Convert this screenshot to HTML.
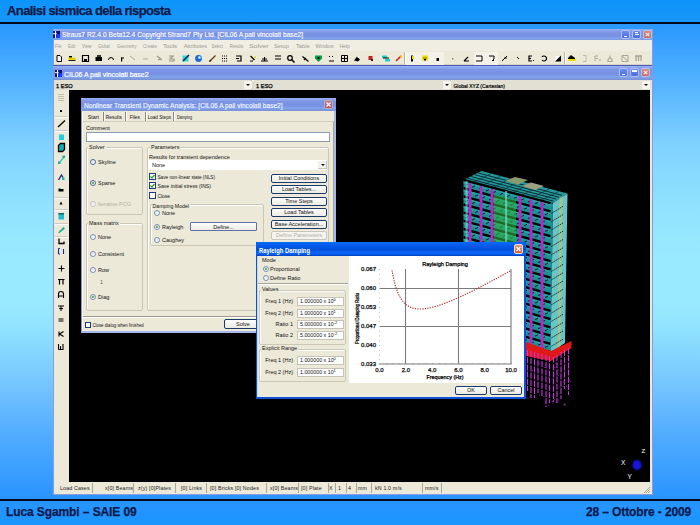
<!DOCTYPE html>
<html><head><meta charset="utf-8">
<style>
*{margin:0;padding:0;box-sizing:border-box}
html,body{width:700px;height:525px;overflow:hidden}
body{position:relative;font-family:"Liberation Sans",sans-serif;background:linear-gradient(to bottom,#0c94fa 0px,#1696f8 20px,#2a98ff 25px,#55b4ff 85px,#80d2ff 145px,#90e2ff 205px,#9aeaff 260px,#9aeaff 300px,#92e4ff 325px,#82d2ff 360px,#72c2ff 390px,#4aa8ff 445px,#2a94ff 498px,#1a96ff 525px)}
.a{position:absolute}
.hdr{left:7px;top:3px;font-size:13px;font-weight:bold;color:#0b1a4c;letter-spacing:-0.6px;white-space:nowrap;-webkit-text-stroke:0.25px #0a1840}
.ftr{top:505px;font-size:12px;font-weight:bold;color:#0b1a4c;white-space:nowrap;-webkit-text-stroke:0.25px #0a1840}
.line{left:0;width:700px;height:2px;background:#050a20}
.tb{background:linear-gradient(to bottom,#98b2f2 0%,#7e96e6 25%,#7890e2 55%,#80a4ee 80%,#7a8ed0 100%)}
.ttl{color:#fff;font-size:6.3px;white-space:nowrap;font-weight:bold;line-height:8px}
.wb{width:9px;height:9px;border:1px solid #b4c2f2;border-radius:2px;background:linear-gradient(#6a8cf0,#4a6ce0)}
.wbc{background:linear-gradient(#dc8c80,#c46a5c)}
.t{font-size:6px;color:#111;white-space:nowrap;line-height:7px}
.g{color:#a8a69a}
.mn{font-size:6px;color:#9a988e;white-space:nowrap;line-height:7px;top:42px}
.grp{border:1px solid #cbc7b6;border-radius:2px;box-shadow:inset 1px 1px 0 #fff}
.inp{background:#fff;border:1px solid #8a9ab8}
.btn{background:linear-gradient(#fdfdfb,#ecebe3);border:1px solid #1b3a6c;border-radius:2px}
.rad{width:6px;height:6px;border-radius:50%;border:1px solid #7890b8;background:linear-gradient(135deg,#e4e4dc,#fff)}
.rad.on::after{content:"";position:absolute;left:1px;top:1px;width:2px;height:2px;border-radius:50%;background:#3a9a3a}
.chk{width:6px;height:6px;border:1px solid #1c3c7c;background:#fff}
.ico{position:absolute;top:55px;height:6px}
.sep{position:absolute;top:483px;width:1px;height:10px;background:#aca899}
</style></head><body>
<div class="a hdr">Analisi sismica della risposta</div>
<div class="a line" style="top:22px"></div>

<!-- ============ main window ============ -->
<div class="a" style="left:53px;top:29px;width:600px;height:466px;background:#ece9d8;border:1px solid #8a9ae6;border-top:none"></div>
<div class="a tb" style="left:53px;top:29px;width:600px;height:11.5px;border-radius:3px 3px 0 0"></div>
<svg class="a" style="left:53px;top:31px" width="7" height="7" viewBox="0 0 7 7"><rect width="7" height="7" fill="#0a1280"/><rect x="3.6" y="3.2" width="3.4" height="3.8" fill="#1a3aff"/><rect x="2" y="0" width="1.1" height="7" fill="#fff"/><rect x="0" y="2.2" width="3.6" height="1" fill="#fff"/></svg>
<svg class="a" style="left:0;top:0;overflow:visible" width="1" height="1"><text x="62" y="37" textLength="241" lengthAdjust="spacingAndGlyphs" font-size="7.5" stroke="#fff" stroke-width="0.15" fill="#fff" font-family="Liberation Sans">Straus7 R2.4.0 Beta12.4 Copyright Strand7 Pty Ltd. [CIL06 A pali vincolati base2]</text></svg>
<div class="a wb" style="left:621px;top:30px"><div class="a" style="left:2px;top:5px;width:3px;height:1px;background:#fff"></div></div>
<div class="a wb" style="left:632px;top:30px"><div class="a" style="left:2px;top:1px;width:3px;height:1px;background:#fff"></div><div class="a" style="left:2px;top:3px;width:4px;height:1px;background:#fff"></div></div>
<div class="a wb wbc" style="left:643px;top:30px;color:#fff;font-size:8px;line-height:7px;text-align:center;font-weight:bold">×</div>

<!-- menu -->
<div class="a" style="left:54px;top:40px;width:598px;height:11px;background:#f0ede3"></div>
<svg class="a" style="left:0;top:40px" width="360" height="11"><text x="55" y="8" textLength="6.6" lengthAdjust="spacingAndGlyphs" font-size="6" fill="#9c9a90" font-family="Liberation Sans">File</text><text x="68" y="8" textLength="7.5" lengthAdjust="spacingAndGlyphs" font-size="6" fill="#9c9a90" font-family="Liberation Sans">Edit</text><text x="82" y="8" textLength="9.6" lengthAdjust="spacingAndGlyphs" font-size="6" fill="#9c9a90" font-family="Liberation Sans">View</text><text x="98" y="8" textLength="11.8" lengthAdjust="spacingAndGlyphs" font-size="6" fill="#9c9a90" font-family="Liberation Sans">Global</text><text x="117" y="8" textLength="19.6" lengthAdjust="spacingAndGlyphs" font-size="6" fill="#9c9a90" font-family="Liberation Sans">Geometry</text><text x="143" y="8" textLength="14.0" lengthAdjust="spacingAndGlyphs" font-size="6" fill="#9c9a90" font-family="Liberation Sans">Create</text><text x="163" y="8" textLength="14.0" lengthAdjust="spacingAndGlyphs" font-size="6" fill="#9c9a90" font-family="Liberation Sans">Tools</text><text x="183.7" y="8" textLength="23.2" lengthAdjust="spacingAndGlyphs" font-size="6" fill="#9c9a90" font-family="Liberation Sans">Attributes</text><text x="211.4" y="8" textLength="11.4" lengthAdjust="spacingAndGlyphs" font-size="6" fill="#9c9a90" font-family="Liberation Sans">Select</text><text x="229.7" y="8" textLength="13.7" lengthAdjust="spacingAndGlyphs" font-size="6" fill="#9c9a90" font-family="Liberation Sans">Results</text><text x="249" y="8" textLength="19.6" lengthAdjust="spacingAndGlyphs" font-size="6" fill="#9c9a90" font-family="Liberation Sans">Solver</text><text x="274" y="8" textLength="15.0" lengthAdjust="spacingAndGlyphs" font-size="6" fill="#9c9a90" font-family="Liberation Sans">Setup</text><text x="296" y="8" textLength="13.7" lengthAdjust="spacingAndGlyphs" font-size="6" fill="#9c9a90" font-family="Liberation Sans">Table</text><text x="315.4" y="8" textLength="18.3" lengthAdjust="spacingAndGlyphs" font-size="6" fill="#9c9a90" font-family="Liberation Sans">Window</text><text x="339.4" y="8" textLength="10.3" lengthAdjust="spacingAndGlyphs" font-size="6" fill="#9c9a90" font-family="Liberation Sans">Help</text></svg>

<!-- toolbar -->
<div class="a" style="left:54px;top:51px;width:598px;height:14px;background:#ece9d8;border-bottom:1px solid #d6d2c2"></div>
<svg class="a" style="left:0;top:0" width="700" height="70">
<path d="M57 55.5h3l1.5 1.5v4.5h-4.5z" fill="#fff" stroke="#000" stroke-width="1"/>
<rect x="68.5" y="57.5" width="7" height="3" fill="#e8d000"/><rect x="69" y="56" width="3" height="1.5" fill="#000"/><rect x="68.5" y="60" width="7" height="1" fill="#222"/>
<path d="M82.5 55.5h6v6h-6z" fill="none" stroke="#000" stroke-width="1.2"/><rect x="84" y="59" width="3" height="2.5" fill="#000"/>
<rect x="95.5" y="57" width="6.5" height="4" fill="#000"/><rect x="97" y="55" width="4" height="2" fill="#333"/>
<path d="M108.5 60a2.5 2.5 0 1 1 5 0" fill="none" stroke="#000" stroke-width="1"/>
<rect x="121" y="57.5" width="1.2" height="4" fill="#000"/><rect x="121" y="57.5" width="3" height="1" fill="#000"/>
<path d="M130 56l5 4" stroke="#aaa8a0" stroke-width="1"/>
<path d="M143 59h5" stroke="#aaa8a0" stroke-width="1"/>
<path d="M157 56l5 4M158 60l3-1" stroke="#9a988e" stroke-width="1.2"/>
<path d="M169 56h4l-3 3h4v2h-5" fill="none" stroke="#9a988e" stroke-width="1.2"/>
<rect x="182.5" y="55.5" width="6" height="6" fill="#30d8d8"/><path d="M183 61l6-6" stroke="#102060" stroke-width="1.6"/>
<circle cx="198.5" cy="58.5" r="3.4" fill="#1a6ad8"/><circle cx="199.5" cy="57.5" r="1.3" fill="#cfe"/>
<path d="M209.5 61.5l6-6" stroke="#6a3a1a" stroke-width="1.3"/><path d="M209.5 61.5l1.5-1.5" stroke="#222" stroke-width="1.3"/>
<path d="M222 56h6M222 58.5h6M222 61h6" stroke="#000" stroke-width="1" stroke-dasharray="1 1"/>
<path d="M236 56h5v5h-4M236 58.5h3" fill="none" stroke="#000" stroke-width="1.2"/>
<path d="M250.5 56l4 4M250 61h3" stroke="#000" stroke-width="1.2"/><rect x="254" y="56" width="2" height="2" fill="#e0e040"/>
<path d="M261 61h7M264.5 57v4M262 59h5" stroke="#000" stroke-width="1.1"/>
<path d="M275 56h6M275 59h6" stroke="#000" stroke-width="1"/>
<circle cx="290" cy="58" r="2.3" fill="none" stroke="#000" stroke-width="1.2"/><path d="M291.5 59.5l3 3" stroke="#000" stroke-width="1.4"/>
<path d="M302.5 56.5l6 5M304 60l2-2" stroke="#000" stroke-width="1.2"/>
<path d="M315 55.5h7v3l-3.5 3.5-3.5-3.5z" fill="#08a048"/><circle cx="318.5" cy="58" r="1.2" fill="#111"/>
<path d="M329 56l1 1M333 56l-1 1M329 61h5" stroke="#000" stroke-width="1"/>
<path d="M341.5 55.5h6v6h-6zM341.5 58.5h6M344.5 55.5v6" fill="none" stroke="#000" stroke-width="1"/>
<path d="M354 60.5l3-4 3 3-2 2z" fill="#000"/><circle cx="358.5" cy="57" r="1" fill="#fff"/>
<rect x="368.5" y="56" width="4" height="4" fill="#c02020"/><rect x="371" y="59" width="2" height="2" fill="#222"/>
<rect x="382" y="55.5" width="5" height="2.5" fill="#20d0d0"/><rect x="385" y="59" width="5" height="2.5" fill="#20d0d0"/><path d="M383 58h6" stroke="#000" stroke-width="1"/>
<path d="M396 61l5-5" stroke="#d02020" stroke-width="1.6"/><rect x="400" y="55.5" width="2" height="2" fill="#f0c000"/>
<rect x="404" y="52" width="1" height="12" fill="#b8b4a4"/><rect x="405" y="52" width="1" height="12" fill="#fff"/>
<rect x="406" y="52" width="38" height="13" fill="#f3f1e8"/>
<rect x="411" y="55.5" width="2" height="6" fill="#000"/><rect x="412" y="56" width="2" height="3" fill="#e8e000"/>
<rect x="422" y="55.5" width="6" height="5" fill="#f0e000"/><rect x="423.5" y="57.5" width="1" height="1" fill="#000"/><rect x="425.5" y="57.5" width="1" height="1" fill="#000"/><rect x="424" y="59" width="2" height="1.5" fill="#000"/>
<rect x="436.5" y="58" width="2.5" height="3" fill="#000"/>
<rect x="452" y="58" width="1.5" height="1.5" fill="#888"/>
<path d="M464 61l4-4M464 61h5" stroke="#000" stroke-width="1.2"/>
<rect x="474" y="52" width="24" height="13" fill="#f3f1e8"/>
<path d="M476 56h6v5h-6" fill="none" stroke="#000" stroke-width="1"/>
<path d="M489 56h5v3l-2 2M493 61l1-1" fill="none" stroke="#000" stroke-width="1"/>
<path d="M502 61l5-5M504 58h3" stroke="#000" stroke-width="1"/>
<path d="M517 57l2 2" stroke="#000" stroke-width="1"/>
<path d="M532 56h-3v5h3M529 58.5h2" fill="none" stroke="#000" stroke-width="1.2"/><rect x="533" y="60" width="1" height="1" fill="#000"/>
<path d="M542 57a2.5 2.5 0 1 1 0 3" fill="none" stroke="#000" stroke-width="1.2"/>
<path d="M555 61.5v-5.5h6z" fill="#fff"/><path d="M555 61.5h6v-6z" fill="#000"/>
<rect x="564" y="52" width="1" height="12" fill="#b8b4a4"/><rect x="565" y="52" width="1" height="12" fill="#fff"/>
<path d="M568 58l3-3 4 3v3h-7z" fill="#000"/><path d="M568 59h8v2h-8z" fill="#e8e000"/>
<path d="M583 55.5h3v6h-3" fill="none" stroke="#bcb9ae" stroke-width="1"/>
<path d="M595 56h3M595 56v5M596 58.5h2M599 60h2" stroke="#aaa79b" stroke-width="1"/>
<path d="M610 55.5v2l-2 2v2h4v-2l-2-2" fill="none" stroke="#aaa79b" stroke-width="1.1"/>
<path d="M622 55.5h6v6h-6zM622 56l6 5" fill="none" stroke="#aaa79b" stroke-width="1"/>
<path d="M635 56h7M636 56v5M638.5 56v5M641 56v5" stroke="#a8a598" stroke-width="1.3"/>
</svg>


<!-- ============ child window ============ -->
<div class="a" style="left:53px;top:64.5px;width:599px;height:1.5px;background:#4a5ab4"></div><div class="a tb" style="left:53px;top:66px;width:599px;height:14px"></div>
<svg class="a" style="left:55px;top:70px" width="7" height="7" viewBox="0 0 7 7"><rect width="7" height="7" fill="#0a1280"/><rect x="3.6" y="3.2" width="3.4" height="3.8" fill="#1a3aff"/><rect x="2" y="0" width="1.1" height="7" fill="#fff"/><rect x="0" y="2.2" width="3.6" height="1" fill="#fff"/></svg>
<svg class="a" style="left:0;top:0;overflow:visible" width="1" height="1"><text x="64" y="76.5" textLength="84.5" lengthAdjust="spacingAndGlyphs" font-size="7" fill="#fff" stroke="#fff" stroke-width="0.2" font-family="Liberation Sans">CIL06 A pali vincolati base2</text></svg>
<div class="a wb" style="left:619px;top:68px"><div class="a" style="left:2px;top:5px;width:3px;height:1px;background:#fff"></div></div>
<div class="a wb" style="left:630px;top:68px"><div class="a" style="left:1px;top:1px;width:5px;height:1.5px;background:#fff"></div></div>
<div class="a wb wbc" style="left:641px;top:68px;color:#fff;font-size:8px;line-height:7px;text-align:center;font-weight:bold">×</div>

<!-- combo row -->
<div class="a" style="left:54px;top:80px;width:597px;height:10px;background:#dcd9cd;border-top:1px solid #fff"></div>
<div class="a" style="left:54px;top:80px;width:198px;height:10px;background:#e2dfd3;border-right:1px solid #bab7aa"></div>
<div class="a" style="left:244px;top:81px;width:8px;height:8px;background:#f4f3ee"></div>
<div class="a" style="left:246px;top:84px;width:0;height:0;border-left:2px solid transparent;border-right:2px solid transparent;border-top:2px solid #111"></div>
<div class="a t" style="left:56px;top:82.5px;font-size:5.6px;-webkit-text-stroke:0.25px #000;color:#000">1 ESO</div>
<div class="a" style="left:254px;top:80px;width:197px;height:10px;background:#e2dfd3;border-right:1px solid #bab7aa"></div>
<div class="a" style="left:443px;top:81px;width:8px;height:8px;background:#f4f3ee"></div>
<div class="a" style="left:445px;top:84px;width:0;height:0;border-left:2px solid transparent;border-right:2px solid transparent;border-top:2px solid #111"></div>
<div class="a t" style="left:256px;top:82.5px;font-size:5.6px;-webkit-text-stroke:0.25px #000;color:#000">1 ESO</div>
<div class="a" style="left:452px;top:80px;width:199px;height:10px;background:#e2dfd3"></div>
<svg class="a" style="left:0;top:0;overflow:visible" width="1" height="1"><text x="453.5" y="88" textLength="51.5" lengthAdjust="spacingAndGlyphs" font-size="6" fill="#000" stroke="#000" stroke-width="0.2" font-family="Liberation Sans">Global XYZ (Cartesian)</text></svg>
<div class="a" style="left:642px;top:81px;width:8px;height:8px;background:#f4f3ee"></div>
<div class="a" style="left:644px;top:84px;width:0;height:0;border-left:2px solid transparent;border-right:2px solid transparent;border-top:2px solid #111"></div>

<!-- left toolbar + black view -->
<div class="a" style="left:54px;top:90px;width:14px;height:392px;background:#ece9d8"></div>
<svg class="a" style="left:0;top:0" width="80" height="360">
<rect x="58.5" y="94" width="1" height="1" fill="#9a978a"/>
<rect x="60.5" y="94" width="1" height="1" fill="#9a978a"/>
<rect x="62.5" y="94" width="1" height="1" fill="#9a978a"/>
<rect x="58.5" y="96" width="1" height="1" fill="#9a978a"/>
<rect x="60.5" y="96" width="1" height="1" fill="#9a978a"/>
<rect x="62.5" y="96" width="1" height="1" fill="#9a978a"/>
<rect x="58.5" y="98" width="1" height="1" fill="#9a978a"/>
<rect x="60.5" y="98" width="1" height="1" fill="#9a978a"/>
<rect x="62.5" y="98" width="1" height="1" fill="#9a978a"/>
<rect x="58.5" y="100" width="1" height="1" fill="#9a978a"/>
<rect x="60.5" y="100" width="1" height="1" fill="#9a978a"/>
<rect x="62.5" y="100" width="1" height="1" fill="#9a978a"/>
<rect x="60" y="110" width="2" height="2" fill="#000"/>
<rect x="55" y="116" width="13" height="1" fill="#cfcbbb"/><rect x="55" y="117" width="13" height="1" fill="#fff"/>
<path d="M58 127l7-6.5" stroke="#000" stroke-width="1.3"/>
<rect x="55" y="130" width="13" height="1" fill="#cfcbbb"/><rect x="55" y="131" width="13" height="1" fill="#fff"/>
<rect x="59" y="134.5" width="5" height="5.5" fill="#20d0e0"/>
<path d="M58.5 145.5l2-2h4v6l-2 2h-4z" fill="#10b0b8" stroke="#000" stroke-width="1.3"/>
<path d="M58.5 163.5l6-7" stroke="#30c8c0" stroke-width="1.2"/><rect x="58" y="161.5" width="2.5" height="2.5" fill="#20b0b0"/><rect x="62.5" y="155.5" width="2.5" height="2.5" fill="#20b0b0"/>
<path d="M58.5 180l3-5 1.5 2.5" fill="none" stroke="#1a2a7a" stroke-width="1.4"/><rect x="62" y="177.5" width="2.5" height="2.5" fill="#20b0b0"/>
<rect x="58.5" y="189" width="5" height="2.5" fill="#000"/><rect x="58.5" y="188" width="2" height="1" fill="#20a0b0"/>
<rect x="55" y="197" width="13" height="1" fill="#cfcbbb"/><rect x="55" y="198" width="13" height="1" fill="#fff"/>
<path d="M59.5 204.5l1.5-3 1.5 3z" fill="#000"/>
<rect x="55" y="209" width="13" height="1" fill="#cfcbbb"/><rect x="55" y="210" width="13" height="1" fill="#fff"/>
<rect x="58.5" y="213" width="5.5" height="6.5" fill="#18c0d0"/><rect x="58.5" y="213" width="5.5" height="1.5" fill="#086878"/>
<rect x="55" y="223" width="13" height="1" fill="#cfcbbb"/><rect x="55" y="224" width="13" height="1" fill="#fff"/>
<path d="M58 232.5l5.5-5.5 1.5 1.5-5.5 4.5z" fill="#10b090"/>
<rect x="55" y="236" width="13" height="1" fill="#cfcbbb"/><rect x="55" y="237" width="13" height="1" fill="#fff"/>
<path d="M59 238.5v5h5v-2" fill="none" stroke="#000" stroke-width="1.3"/>
<path d="M58.5 248.5v5.5M58.5 248.5h1.5M58.5 254h1.5M63.5 249v5" stroke="#1a2aa0" stroke-width="1.1"/>
<path d="M58.5 268.5h6M61.5 265.5v6" stroke="#000" stroke-width="1.1"/>
<path d="M58 279.5h6.5M59.5 279.5v5M63 279.5v5" stroke="#000" stroke-width="1.2"/>
<path d="M58.5 298v-4a2.5 2.5 0 0 1 5 0v4M59 296h4" fill="none" stroke="#000" stroke-width="1.1"/>
<path d="M58 306h6M61 306v5M59 308.5h4" stroke="#000" stroke-width="1.1"/>
<path d="M58.5 319h5M58.5 321h5" stroke="#000" stroke-width="1"/>
<path d="M59 331.5v5M63.5 331.5l-4 2.5 4 2.5" fill="none" stroke="#000" stroke-width="1.1"/>
<path d="M58.5 344v5.5M60.5 346v3.5M63 344v5.5M58.5 349.5h5" stroke="#000" stroke-width="1.1"/>
</svg>

<div class="a" style="left:69px;top:90px;width:581px;height:392px;background:#000"></div>
<svg class="a" style="left:0;top:0" width="700" height="500">
<path d="M463.5 180L481.5 171L567.5 193.5L553 203Z" fill="#249a9c"/><line x1="467.1" y1="178.2" x2="553.4" y2="201.1" stroke="#0a2a30" stroke-width="1"/><line x1="470.7" y1="176.4" x2="556.3" y2="199.2" stroke="#0a2a30" stroke-width="1"/><line x1="474.3" y1="174.6" x2="559.2" y2="197.3" stroke="#0a2a30" stroke-width="1"/><line x1="477.9" y1="172.8" x2="562.1" y2="195.4" stroke="#0a2a30" stroke-width="1"/><line x1="473.2" y1="182.6" x2="491.2" y2="173.6" stroke="#0a2a30" stroke-width="0.6"/><line x1="482.8" y1="185.1" x2="500.8" y2="176.1" stroke="#0a2a30" stroke-width="0.6"/><line x1="492.5" y1="187.7" x2="510.5" y2="178.7" stroke="#0a2a30" stroke-width="0.6"/><line x1="502.2" y1="190.2" x2="520.2" y2="181.2" stroke="#0a2a30" stroke-width="0.6"/><line x1="511.8" y1="192.8" x2="529.8" y2="183.8" stroke="#0a2a30" stroke-width="0.6"/><line x1="521.5" y1="195.3" x2="539.5" y2="186.3" stroke="#0a2a30" stroke-width="0.6"/><line x1="531.2" y1="197.9" x2="549.2" y2="188.9" stroke="#0a2a30" stroke-width="0.6"/><line x1="540.8" y1="200.4" x2="558.8" y2="191.4" stroke="#0a2a30" stroke-width="0.6"/><path d="M505 181L518 184.5L528 180L515 177Z" fill="#8a9a70"/><path d="M522 186L535 190L544 186L531 182.5Z" fill="#9aa080"/><path d="M463.5 180.0L553 203.7175L550.5 352.23L463.5 327.0Z" fill="#1a9090"/><line x1="463.5" y1="180.0" x2="550.5" y2="203.1" stroke="#000" stroke-width="2.4"/><path d="M463.5 181.5L550.5 204.6L550.5 206.3L463.5 183.2Z" fill="#28a8a8" opacity="0.8"/><line x1="465" y1="185.4" x2="468" y2="183.9" stroke="#0a1a30" stroke-width="1"/><line x1="472" y1="187.3" x2="475" y2="185.8" stroke="#0a1a30" stroke-width="1"/><line x1="479" y1="189.1" x2="482" y2="187.6" stroke="#0a1a30" stroke-width="1"/><line x1="486" y1="191.0" x2="489" y2="189.5" stroke="#0a1a30" stroke-width="1"/><line x1="493" y1="192.8" x2="496" y2="191.3" stroke="#0a1a30" stroke-width="1"/><line x1="500" y1="194.7" x2="503" y2="193.2" stroke="#0a1a30" stroke-width="1"/><line x1="507" y1="196.5" x2="510" y2="195.0" stroke="#0a1a30" stroke-width="1"/><line x1="514" y1="198.4" x2="517" y2="196.9" stroke="#0a1a30" stroke-width="1"/><line x1="521" y1="200.2" x2="524" y2="198.7" stroke="#0a1a30" stroke-width="1"/><line x1="528" y1="202.1" x2="531" y2="200.6" stroke="#0a1a30" stroke-width="1"/><line x1="535" y1="203.9" x2="538" y2="202.4" stroke="#0a1a30" stroke-width="1"/><line x1="542" y1="205.8" x2="545" y2="204.3" stroke="#0a1a30" stroke-width="1"/><line x1="463.5" y1="188.2" x2="550.5" y2="211.3" stroke="#000" stroke-width="2.4"/><path d="M463.5 189.7L550.5 212.8L550.5 214.5L463.5 191.4Z" fill="#28a8a8" opacity="0.8"/><line x1="468" y1="194.4" x2="471" y2="192.9" stroke="#0a1a30" stroke-width="1"/><line x1="475" y1="196.2" x2="478" y2="194.7" stroke="#0a1a30" stroke-width="1"/><line x1="482" y1="198.1" x2="485" y2="196.6" stroke="#0a1a30" stroke-width="1"/><line x1="489" y1="200.0" x2="492" y2="198.5" stroke="#0a1a30" stroke-width="1"/><line x1="496" y1="201.8" x2="499" y2="200.3" stroke="#0a1a30" stroke-width="1"/><line x1="503" y1="203.7" x2="506" y2="202.2" stroke="#0a1a30" stroke-width="1"/><line x1="510" y1="205.6" x2="513" y2="204.1" stroke="#0a1a30" stroke-width="1"/><line x1="517" y1="207.4" x2="520" y2="205.9" stroke="#0a1a30" stroke-width="1"/><line x1="524" y1="209.3" x2="527" y2="207.8" stroke="#0a1a30" stroke-width="1"/><line x1="531" y1="211.1" x2="534" y2="209.6" stroke="#0a1a30" stroke-width="1"/><line x1="538" y1="213.0" x2="541" y2="211.5" stroke="#0a1a30" stroke-width="1"/><line x1="545" y1="214.9" x2="548" y2="213.4" stroke="#0a1a30" stroke-width="1"/><line x1="463.5" y1="196.3" x2="550.5" y2="219.6" stroke="#000" stroke-width="2.4"/><path d="M463.5 197.8L550.5 221.1L550.5 222.8L463.5 199.5Z" fill="#28a8a8" opacity="0.8"/><line x1="465" y1="201.7" x2="468" y2="200.2" stroke="#0a1a30" stroke-width="1"/><line x1="472" y1="203.6" x2="475" y2="202.1" stroke="#0a1a30" stroke-width="1"/><line x1="479" y1="205.5" x2="482" y2="204.0" stroke="#0a1a30" stroke-width="1"/><line x1="486" y1="207.4" x2="489" y2="205.9" stroke="#0a1a30" stroke-width="1"/><line x1="493" y1="209.2" x2="496" y2="207.7" stroke="#0a1a30" stroke-width="1"/><line x1="500" y1="211.1" x2="503" y2="209.6" stroke="#0a1a30" stroke-width="1"/><line x1="507" y1="213.0" x2="510" y2="211.5" stroke="#0a1a30" stroke-width="1"/><line x1="514" y1="214.9" x2="517" y2="213.4" stroke="#0a1a30" stroke-width="1"/><line x1="521" y1="216.7" x2="524" y2="215.2" stroke="#0a1a30" stroke-width="1"/><line x1="528" y1="218.6" x2="531" y2="217.1" stroke="#0a1a30" stroke-width="1"/><line x1="535" y1="220.5" x2="538" y2="219.0" stroke="#0a1a30" stroke-width="1"/><line x1="542" y1="222.4" x2="545" y2="220.9" stroke="#0a1a30" stroke-width="1"/><line x1="463.5" y1="204.5" x2="550.5" y2="227.9" stroke="#000" stroke-width="2.4"/><path d="M463.5 206.0L550.5 229.4L550.5 231.1L463.5 207.7Z" fill="#28a8a8" opacity="0.8"/><line x1="468" y1="210.7" x2="471" y2="209.2" stroke="#0a1a30" stroke-width="1"/><line x1="475" y1="212.6" x2="478" y2="211.1" stroke="#0a1a30" stroke-width="1"/><line x1="482" y1="214.5" x2="485" y2="213.0" stroke="#0a1a30" stroke-width="1"/><line x1="489" y1="216.4" x2="492" y2="214.9" stroke="#0a1a30" stroke-width="1"/><line x1="496" y1="218.2" x2="499" y2="216.7" stroke="#0a1a30" stroke-width="1"/><line x1="503" y1="220.1" x2="506" y2="218.6" stroke="#0a1a30" stroke-width="1"/><line x1="510" y1="222.0" x2="513" y2="220.5" stroke="#0a1a30" stroke-width="1"/><line x1="517" y1="223.9" x2="520" y2="222.4" stroke="#0a1a30" stroke-width="1"/><line x1="524" y1="225.8" x2="527" y2="224.3" stroke="#0a1a30" stroke-width="1"/><line x1="531" y1="227.7" x2="534" y2="226.2" stroke="#0a1a30" stroke-width="1"/><line x1="538" y1="229.6" x2="541" y2="228.1" stroke="#0a1a30" stroke-width="1"/><line x1="545" y1="231.4" x2="548" y2="229.9" stroke="#0a1a30" stroke-width="1"/><line x1="463.5" y1="212.7" x2="550.5" y2="236.2" stroke="#000" stroke-width="2.4"/><path d="M463.5 214.2L550.5 237.7L550.5 239.4L463.5 215.9Z" fill="#28a8a8" opacity="0.8"/><line x1="465" y1="218.1" x2="468" y2="216.6" stroke="#0a1a30" stroke-width="1"/><line x1="472" y1="220.0" x2="475" y2="218.5" stroke="#0a1a30" stroke-width="1"/><line x1="479" y1="221.9" x2="482" y2="220.4" stroke="#0a1a30" stroke-width="1"/><line x1="486" y1="223.8" x2="489" y2="222.3" stroke="#0a1a30" stroke-width="1"/><line x1="493" y1="225.6" x2="496" y2="224.1" stroke="#0a1a30" stroke-width="1"/><line x1="500" y1="227.5" x2="503" y2="226.0" stroke="#0a1a30" stroke-width="1"/><line x1="507" y1="229.4" x2="510" y2="227.9" stroke="#0a1a30" stroke-width="1"/><line x1="514" y1="231.3" x2="517" y2="229.8" stroke="#0a1a30" stroke-width="1"/><line x1="521" y1="233.2" x2="524" y2="231.7" stroke="#0a1a30" stroke-width="1"/><line x1="528" y1="235.1" x2="531" y2="233.6" stroke="#0a1a30" stroke-width="1"/><line x1="535" y1="237.0" x2="538" y2="235.5" stroke="#0a1a30" stroke-width="1"/><line x1="542" y1="238.9" x2="545" y2="237.4" stroke="#0a1a30" stroke-width="1"/><line x1="463.5" y1="220.8" x2="550.5" y2="244.5" stroke="#000" stroke-width="2.4"/><path d="M463.5 222.3L550.5 246.0L550.5 247.7L463.5 224.0Z" fill="#28a8a8" opacity="0.8"/><line x1="468" y1="227.1" x2="471" y2="225.6" stroke="#0a1a30" stroke-width="1"/><line x1="475" y1="229.0" x2="478" y2="227.5" stroke="#0a1a30" stroke-width="1"/><line x1="482" y1="230.9" x2="485" y2="229.4" stroke="#0a1a30" stroke-width="1"/><line x1="489" y1="232.8" x2="492" y2="231.3" stroke="#0a1a30" stroke-width="1"/><line x1="496" y1="234.7" x2="499" y2="233.2" stroke="#0a1a30" stroke-width="1"/><line x1="503" y1="236.6" x2="506" y2="235.1" stroke="#0a1a30" stroke-width="1"/><line x1="510" y1="238.5" x2="513" y2="237.0" stroke="#0a1a30" stroke-width="1"/><line x1="517" y1="240.4" x2="520" y2="238.9" stroke="#0a1a30" stroke-width="1"/><line x1="524" y1="242.3" x2="527" y2="240.8" stroke="#0a1a30" stroke-width="1"/><line x1="531" y1="244.2" x2="534" y2="242.7" stroke="#0a1a30" stroke-width="1"/><line x1="538" y1="246.1" x2="541" y2="244.6" stroke="#0a1a30" stroke-width="1"/><line x1="545" y1="248.0" x2="548" y2="246.5" stroke="#0a1a30" stroke-width="1"/><line x1="463.5" y1="229.0" x2="550.5" y2="252.8" stroke="#000" stroke-width="2.4"/><path d="M463.5 230.5L550.5 254.3L550.5 256.0L463.5 232.2Z" fill="#28a8a8" opacity="0.8"/><line x1="465" y1="234.4" x2="468" y2="232.9" stroke="#0a1a30" stroke-width="1"/><line x1="472" y1="236.3" x2="475" y2="234.8" stroke="#0a1a30" stroke-width="1"/><line x1="479" y1="238.2" x2="482" y2="236.7" stroke="#0a1a30" stroke-width="1"/><line x1="486" y1="240.1" x2="489" y2="238.6" stroke="#0a1a30" stroke-width="1"/><line x1="493" y1="242.1" x2="496" y2="240.6" stroke="#0a1a30" stroke-width="1"/><line x1="500" y1="244.0" x2="503" y2="242.5" stroke="#0a1a30" stroke-width="1"/><line x1="507" y1="245.9" x2="510" y2="244.4" stroke="#0a1a30" stroke-width="1"/><line x1="514" y1="247.8" x2="517" y2="246.3" stroke="#0a1a30" stroke-width="1"/><line x1="521" y1="249.7" x2="524" y2="248.2" stroke="#0a1a30" stroke-width="1"/><line x1="528" y1="251.6" x2="531" y2="250.1" stroke="#0a1a30" stroke-width="1"/><line x1="535" y1="253.5" x2="538" y2="252.0" stroke="#0a1a30" stroke-width="1"/><line x1="542" y1="255.5" x2="545" y2="254.0" stroke="#0a1a30" stroke-width="1"/><line x1="463.5" y1="237.2" x2="550.5" y2="261.1" stroke="#000" stroke-width="2.4"/><path d="M463.5 238.7L550.5 262.6L550.5 264.3L463.5 240.4Z" fill="#28a8a8" opacity="0.8"/><line x1="468" y1="243.4" x2="471" y2="241.9" stroke="#0a1a30" stroke-width="1"/><line x1="475" y1="245.3" x2="478" y2="243.8" stroke="#0a1a30" stroke-width="1"/><line x1="482" y1="247.2" x2="485" y2="245.7" stroke="#0a1a30" stroke-width="1"/><line x1="489" y1="249.2" x2="492" y2="247.7" stroke="#0a1a30" stroke-width="1"/><line x1="496" y1="251.1" x2="499" y2="249.6" stroke="#0a1a30" stroke-width="1"/><line x1="503" y1="253.0" x2="506" y2="251.5" stroke="#0a1a30" stroke-width="1"/><line x1="510" y1="254.9" x2="513" y2="253.4" stroke="#0a1a30" stroke-width="1"/><line x1="517" y1="256.9" x2="520" y2="255.4" stroke="#0a1a30" stroke-width="1"/><line x1="524" y1="258.8" x2="527" y2="257.3" stroke="#0a1a30" stroke-width="1"/><line x1="531" y1="260.7" x2="534" y2="259.2" stroke="#0a1a30" stroke-width="1"/><line x1="538" y1="262.6" x2="541" y2="261.1" stroke="#0a1a30" stroke-width="1"/><line x1="545" y1="264.6" x2="548" y2="263.1" stroke="#0a1a30" stroke-width="1"/><line x1="463.5" y1="245.3" x2="550.5" y2="269.4" stroke="#000" stroke-width="2.4"/><path d="M463.5 246.8L550.5 270.9L550.5 272.6L463.5 248.5Z" fill="#28a8a8" opacity="0.8"/><line x1="465" y1="250.7" x2="468" y2="249.2" stroke="#0a1a30" stroke-width="1"/><line x1="472" y1="252.7" x2="475" y2="251.2" stroke="#0a1a30" stroke-width="1"/><line x1="479" y1="254.6" x2="482" y2="253.1" stroke="#0a1a30" stroke-width="1"/><line x1="486" y1="256.5" x2="489" y2="255.0" stroke="#0a1a30" stroke-width="1"/><line x1="493" y1="258.5" x2="496" y2="257.0" stroke="#0a1a30" stroke-width="1"/><line x1="500" y1="260.4" x2="503" y2="258.9" stroke="#0a1a30" stroke-width="1"/><line x1="507" y1="262.3" x2="510" y2="260.8" stroke="#0a1a30" stroke-width="1"/><line x1="514" y1="264.3" x2="517" y2="262.8" stroke="#0a1a30" stroke-width="1"/><line x1="521" y1="266.2" x2="524" y2="264.7" stroke="#0a1a30" stroke-width="1"/><line x1="528" y1="268.1" x2="531" y2="266.6" stroke="#0a1a30" stroke-width="1"/><line x1="535" y1="270.1" x2="538" y2="268.6" stroke="#0a1a30" stroke-width="1"/><line x1="542" y1="272.0" x2="545" y2="270.5" stroke="#0a1a30" stroke-width="1"/><line x1="463.5" y1="253.5" x2="550.5" y2="277.6" stroke="#000" stroke-width="2.4"/><path d="M463.5 255.0L550.5 279.1L550.5 280.8L463.5 256.7Z" fill="#28a8a8" opacity="0.8"/><line x1="468" y1="259.7" x2="471" y2="258.2" stroke="#0a1a30" stroke-width="1"/><line x1="475" y1="261.7" x2="478" y2="260.2" stroke="#0a1a30" stroke-width="1"/><line x1="482" y1="263.6" x2="485" y2="262.1" stroke="#0a1a30" stroke-width="1"/><line x1="489" y1="265.6" x2="492" y2="264.1" stroke="#0a1a30" stroke-width="1"/><line x1="496" y1="267.5" x2="499" y2="266.0" stroke="#0a1a30" stroke-width="1"/><line x1="503" y1="269.5" x2="506" y2="268.0" stroke="#0a1a30" stroke-width="1"/><line x1="510" y1="271.4" x2="513" y2="269.9" stroke="#0a1a30" stroke-width="1"/><line x1="517" y1="273.3" x2="520" y2="271.8" stroke="#0a1a30" stroke-width="1"/><line x1="524" y1="275.3" x2="527" y2="273.8" stroke="#0a1a30" stroke-width="1"/><line x1="531" y1="277.2" x2="534" y2="275.7" stroke="#0a1a30" stroke-width="1"/><line x1="538" y1="279.2" x2="541" y2="277.7" stroke="#0a1a30" stroke-width="1"/><line x1="545" y1="281.1" x2="548" y2="279.6" stroke="#0a1a30" stroke-width="1"/><line x1="463.5" y1="261.7" x2="550.5" y2="285.9" stroke="#000" stroke-width="2.4"/><path d="M463.5 263.2L550.5 287.4L550.5 289.1L463.5 264.9Z" fill="#28a8a8" opacity="0.8"/><line x1="465" y1="267.1" x2="468" y2="265.6" stroke="#0a1a30" stroke-width="1"/><line x1="472" y1="269.0" x2="475" y2="267.5" stroke="#0a1a30" stroke-width="1"/><line x1="479" y1="271.0" x2="482" y2="269.5" stroke="#0a1a30" stroke-width="1"/><line x1="486" y1="272.9" x2="489" y2="271.4" stroke="#0a1a30" stroke-width="1"/><line x1="493" y1="274.9" x2="496" y2="273.4" stroke="#0a1a30" stroke-width="1"/><line x1="500" y1="276.8" x2="503" y2="275.3" stroke="#0a1a30" stroke-width="1"/><line x1="507" y1="278.8" x2="510" y2="277.3" stroke="#0a1a30" stroke-width="1"/><line x1="514" y1="280.8" x2="517" y2="279.3" stroke="#0a1a30" stroke-width="1"/><line x1="521" y1="282.7" x2="524" y2="281.2" stroke="#0a1a30" stroke-width="1"/><line x1="528" y1="284.7" x2="531" y2="283.2" stroke="#0a1a30" stroke-width="1"/><line x1="535" y1="286.6" x2="538" y2="285.1" stroke="#0a1a30" stroke-width="1"/><line x1="542" y1="288.6" x2="545" y2="287.1" stroke="#0a1a30" stroke-width="1"/><line x1="463.5" y1="269.8" x2="550.5" y2="294.2" stroke="#000" stroke-width="2.4"/><path d="M463.5 271.3L550.5 295.7L550.5 297.4L463.5 273.0Z" fill="#28a8a8" opacity="0.8"/><line x1="468" y1="276.1" x2="471" y2="274.6" stroke="#0a1a30" stroke-width="1"/><line x1="475" y1="278.1" x2="478" y2="276.6" stroke="#0a1a30" stroke-width="1"/><line x1="482" y1="280.0" x2="485" y2="278.5" stroke="#0a1a30" stroke-width="1"/><line x1="489" y1="282.0" x2="492" y2="280.5" stroke="#0a1a30" stroke-width="1"/><line x1="496" y1="283.9" x2="499" y2="282.4" stroke="#0a1a30" stroke-width="1"/><line x1="503" y1="285.9" x2="506" y2="284.4" stroke="#0a1a30" stroke-width="1"/><line x1="510" y1="287.9" x2="513" y2="286.4" stroke="#0a1a30" stroke-width="1"/><line x1="517" y1="289.8" x2="520" y2="288.3" stroke="#0a1a30" stroke-width="1"/><line x1="524" y1="291.8" x2="527" y2="290.3" stroke="#0a1a30" stroke-width="1"/><line x1="531" y1="293.8" x2="534" y2="292.3" stroke="#0a1a30" stroke-width="1"/><line x1="538" y1="295.7" x2="541" y2="294.2" stroke="#0a1a30" stroke-width="1"/><line x1="545" y1="297.7" x2="548" y2="296.2" stroke="#0a1a30" stroke-width="1"/><line x1="463.5" y1="278.0" x2="550.5" y2="302.5" stroke="#000" stroke-width="2.4"/><path d="M463.5 279.5L550.5 304.0L550.5 305.7L463.5 281.2Z" fill="#28a8a8" opacity="0.8"/><line x1="465" y1="283.4" x2="468" y2="281.9" stroke="#0a1a30" stroke-width="1"/><line x1="472" y1="285.4" x2="475" y2="283.9" stroke="#0a1a30" stroke-width="1"/><line x1="479" y1="287.4" x2="482" y2="285.9" stroke="#0a1a30" stroke-width="1"/><line x1="486" y1="289.3" x2="489" y2="287.8" stroke="#0a1a30" stroke-width="1"/><line x1="493" y1="291.3" x2="496" y2="289.8" stroke="#0a1a30" stroke-width="1"/><line x1="500" y1="293.3" x2="503" y2="291.8" stroke="#0a1a30" stroke-width="1"/><line x1="507" y1="295.3" x2="510" y2="293.8" stroke="#0a1a30" stroke-width="1"/><line x1="514" y1="297.2" x2="517" y2="295.7" stroke="#0a1a30" stroke-width="1"/><line x1="521" y1="299.2" x2="524" y2="297.7" stroke="#0a1a30" stroke-width="1"/><line x1="528" y1="301.2" x2="531" y2="299.7" stroke="#0a1a30" stroke-width="1"/><line x1="535" y1="303.1" x2="538" y2="301.6" stroke="#0a1a30" stroke-width="1"/><line x1="542" y1="305.1" x2="545" y2="303.6" stroke="#0a1a30" stroke-width="1"/><line x1="463.5" y1="286.2" x2="550.5" y2="310.8" stroke="#000" stroke-width="2.4"/><path d="M463.5 287.7L550.5 312.3L550.5 314.0L463.5 289.4Z" fill="#28a8a8" opacity="0.8"/><line x1="468" y1="292.4" x2="471" y2="290.9" stroke="#0a1a30" stroke-width="1"/><line x1="475" y1="294.4" x2="478" y2="292.9" stroke="#0a1a30" stroke-width="1"/><line x1="482" y1="296.4" x2="485" y2="294.9" stroke="#0a1a30" stroke-width="1"/><line x1="489" y1="298.4" x2="492" y2="296.9" stroke="#0a1a30" stroke-width="1"/><line x1="496" y1="300.4" x2="499" y2="298.9" stroke="#0a1a30" stroke-width="1"/><line x1="503" y1="302.3" x2="506" y2="300.8" stroke="#0a1a30" stroke-width="1"/><line x1="510" y1="304.3" x2="513" y2="302.8" stroke="#0a1a30" stroke-width="1"/><line x1="517" y1="306.3" x2="520" y2="304.8" stroke="#0a1a30" stroke-width="1"/><line x1="524" y1="308.3" x2="527" y2="306.8" stroke="#0a1a30" stroke-width="1"/><line x1="531" y1="310.3" x2="534" y2="308.8" stroke="#0a1a30" stroke-width="1"/><line x1="538" y1="312.3" x2="541" y2="310.8" stroke="#0a1a30" stroke-width="1"/><line x1="545" y1="314.2" x2="548" y2="312.7" stroke="#0a1a30" stroke-width="1"/><line x1="463.5" y1="294.3" x2="550.5" y2="319.1" stroke="#000" stroke-width="2.4"/><path d="M463.5 295.8L550.5 320.6L550.5 322.3L463.5 297.5Z" fill="#28a8a8" opacity="0.8"/><line x1="465" y1="299.8" x2="468" y2="298.3" stroke="#0a1a30" stroke-width="1"/><line x1="472" y1="301.8" x2="475" y2="300.3" stroke="#0a1a30" stroke-width="1"/><line x1="479" y1="303.7" x2="482" y2="302.2" stroke="#0a1a30" stroke-width="1"/><line x1="486" y1="305.7" x2="489" y2="304.2" stroke="#0a1a30" stroke-width="1"/><line x1="493" y1="307.7" x2="496" y2="306.2" stroke="#0a1a30" stroke-width="1"/><line x1="500" y1="309.7" x2="503" y2="308.2" stroke="#0a1a30" stroke-width="1"/><line x1="507" y1="311.7" x2="510" y2="310.2" stroke="#0a1a30" stroke-width="1"/><line x1="514" y1="313.7" x2="517" y2="312.2" stroke="#0a1a30" stroke-width="1"/><line x1="521" y1="315.7" x2="524" y2="314.2" stroke="#0a1a30" stroke-width="1"/><line x1="528" y1="317.7" x2="531" y2="316.2" stroke="#0a1a30" stroke-width="1"/><line x1="535" y1="319.7" x2="538" y2="318.2" stroke="#0a1a30" stroke-width="1"/><line x1="542" y1="321.7" x2="545" y2="320.2" stroke="#0a1a30" stroke-width="1"/><line x1="463.5" y1="302.5" x2="550.5" y2="327.4" stroke="#000" stroke-width="2.4"/><path d="M463.5 304.0L550.5 328.9L550.5 330.6L463.5 305.7Z" fill="#28a8a8" opacity="0.8"/><line x1="468" y1="308.8" x2="471" y2="307.3" stroke="#0a1a30" stroke-width="1"/><line x1="475" y1="310.8" x2="478" y2="309.3" stroke="#0a1a30" stroke-width="1"/><line x1="482" y1="312.8" x2="485" y2="311.3" stroke="#0a1a30" stroke-width="1"/><line x1="489" y1="314.8" x2="492" y2="313.3" stroke="#0a1a30" stroke-width="1"/><line x1="496" y1="316.8" x2="499" y2="315.3" stroke="#0a1a30" stroke-width="1"/><line x1="503" y1="318.8" x2="506" y2="317.3" stroke="#0a1a30" stroke-width="1"/><line x1="510" y1="320.8" x2="513" y2="319.3" stroke="#0a1a30" stroke-width="1"/><line x1="517" y1="322.8" x2="520" y2="321.3" stroke="#0a1a30" stroke-width="1"/><line x1="524" y1="324.8" x2="527" y2="323.3" stroke="#0a1a30" stroke-width="1"/><line x1="531" y1="326.8" x2="534" y2="325.3" stroke="#0a1a30" stroke-width="1"/><line x1="538" y1="328.8" x2="541" y2="327.3" stroke="#0a1a30" stroke-width="1"/><line x1="545" y1="330.8" x2="548" y2="329.3" stroke="#0a1a30" stroke-width="1"/><line x1="463.5" y1="310.7" x2="550.5" y2="335.7" stroke="#000" stroke-width="2.4"/><path d="M463.5 312.2L550.5 337.2L550.5 338.9L463.5 313.9Z" fill="#28a8a8" opacity="0.8"/><line x1="465" y1="316.1" x2="468" y2="314.6" stroke="#0a1a30" stroke-width="1"/><line x1="472" y1="318.1" x2="475" y2="316.6" stroke="#0a1a30" stroke-width="1"/><line x1="479" y1="320.1" x2="482" y2="318.6" stroke="#0a1a30" stroke-width="1"/><line x1="486" y1="322.1" x2="489" y2="320.6" stroke="#0a1a30" stroke-width="1"/><line x1="493" y1="324.1" x2="496" y2="322.6" stroke="#0a1a30" stroke-width="1"/><line x1="500" y1="326.2" x2="503" y2="324.7" stroke="#0a1a30" stroke-width="1"/><line x1="507" y1="328.2" x2="510" y2="326.7" stroke="#0a1a30" stroke-width="1"/><line x1="514" y1="330.2" x2="517" y2="328.7" stroke="#0a1a30" stroke-width="1"/><line x1="521" y1="332.2" x2="524" y2="330.7" stroke="#0a1a30" stroke-width="1"/><line x1="528" y1="334.2" x2="531" y2="332.7" stroke="#0a1a30" stroke-width="1"/><line x1="535" y1="336.2" x2="538" y2="334.7" stroke="#0a1a30" stroke-width="1"/><line x1="542" y1="338.2" x2="545" y2="336.7" stroke="#0a1a30" stroke-width="1"/><line x1="463.5" y1="318.8" x2="550.5" y2="343.9" stroke="#000" stroke-width="2.4"/><path d="M463.5 320.3L550.5 345.4L550.5 347.1L463.5 322.0Z" fill="#28a8a8" opacity="0.8"/><line x1="468" y1="325.1" x2="471" y2="323.6" stroke="#0a1a30" stroke-width="1"/><line x1="475" y1="327.2" x2="478" y2="325.7" stroke="#0a1a30" stroke-width="1"/><line x1="482" y1="329.2" x2="485" y2="327.7" stroke="#0a1a30" stroke-width="1"/><line x1="489" y1="331.2" x2="492" y2="329.7" stroke="#0a1a30" stroke-width="1"/><line x1="496" y1="333.2" x2="499" y2="331.7" stroke="#0a1a30" stroke-width="1"/><line x1="503" y1="335.2" x2="506" y2="333.7" stroke="#0a1a30" stroke-width="1"/><line x1="510" y1="337.3" x2="513" y2="335.8" stroke="#0a1a30" stroke-width="1"/><line x1="517" y1="339.3" x2="520" y2="337.8" stroke="#0a1a30" stroke-width="1"/><line x1="524" y1="341.3" x2="527" y2="339.8" stroke="#0a1a30" stroke-width="1"/><line x1="531" y1="343.3" x2="534" y2="341.8" stroke="#0a1a30" stroke-width="1"/><line x1="538" y1="345.3" x2="541" y2="343.8" stroke="#0a1a30" stroke-width="1"/><line x1="545" y1="347.4" x2="548" y2="345.9" stroke="#0a1a30" stroke-width="1"/><line x1="463.5" y1="327.0" x2="550.5" y2="352.2" stroke="#000" stroke-width="2.4"/><path d="M494 194.1L516 199.9L516 342.2L494 335.8Z" fill="#30b040" opacity="0.6"/><rect x="465.5" y="181" width="2.2" height="150" fill="#80e0e0" opacity="0.6"/><rect x="505" y="191" width="2.2" height="150" fill="#80e0e0" opacity="0.6"/><rect x="468.6" y="183" width="2.9" height="146" fill="#b828c8"/><rect x="479.6" y="186" width="2.9" height="146" fill="#b828c8"/><rect x="490.6" y="189" width="2.9" height="147" fill="#b828c8"/><rect x="518.6" y="196" width="2.9" height="147" fill="#b828c8"/><rect x="529.6" y="199" width="2.9" height="148" fill="#b828c8"/><rect x="540.6" y="202" width="2.9" height="148" fill="#b828c8"/><path d="M553 203L567.5 193.5L565 343L550.5 352.5Z" fill="#68c4c8"/><path d="M559.5 198L562.5 196L560.5 346.5L557.5 348.5Z" fill="#c8c860" opacity="0.6"/><line x1="551.5" y1="213.3" x2="563" y2="206.3" stroke="#000" stroke-width="1" stroke-dasharray="1.2 1.2"/><line x1="551.5" y1="221.6" x2="563" y2="214.6" stroke="#000" stroke-width="1" stroke-dasharray="1.2 1.2"/><line x1="551.5" y1="229.9" x2="563" y2="222.9" stroke="#000" stroke-width="1" stroke-dasharray="1.2 1.2"/><line x1="551.5" y1="238.2" x2="563" y2="231.2" stroke="#000" stroke-width="1" stroke-dasharray="1.2 1.2"/><line x1="551.5" y1="246.5" x2="563" y2="239.5" stroke="#000" stroke-width="1" stroke-dasharray="1.2 1.2"/><line x1="551.5" y1="254.8" x2="563" y2="247.8" stroke="#000" stroke-width="1" stroke-dasharray="1.2 1.2"/><line x1="551.5" y1="263.1" x2="563" y2="256.1" stroke="#000" stroke-width="1" stroke-dasharray="1.2 1.2"/><line x1="551.5" y1="271.4" x2="563" y2="264.4" stroke="#000" stroke-width="1" stroke-dasharray="1.2 1.2"/><line x1="551.5" y1="279.8" x2="563" y2="272.8" stroke="#000" stroke-width="1" stroke-dasharray="1.2 1.2"/><line x1="551.5" y1="288.1" x2="563" y2="281.1" stroke="#000" stroke-width="1" stroke-dasharray="1.2 1.2"/><line x1="551.5" y1="296.4" x2="563" y2="289.4" stroke="#000" stroke-width="1" stroke-dasharray="1.2 1.2"/><line x1="551.5" y1="304.7" x2="563" y2="297.7" stroke="#000" stroke-width="1" stroke-dasharray="1.2 1.2"/><line x1="551.5" y1="313.0" x2="563" y2="306.0" stroke="#000" stroke-width="1" stroke-dasharray="1.2 1.2"/><line x1="551.5" y1="321.3" x2="563" y2="314.3" stroke="#000" stroke-width="1" stroke-dasharray="1.2 1.2"/><line x1="551.5" y1="329.6" x2="563" y2="322.6" stroke="#000" stroke-width="1" stroke-dasharray="1.2 1.2"/><line x1="551.5" y1="337.9" x2="563" y2="330.9" stroke="#000" stroke-width="1" stroke-dasharray="1.2 1.2"/><line x1="551.5" y1="346.2" x2="563" y2="339.2" stroke="#000" stroke-width="1" stroke-dasharray="1.2 1.2"/><path d="M526 342L551 351L571.5 341L571.5 348L551 361L526 356Z" fill="#e01818"/><line x1="527.5" y1="350" x2="527.5" y2="391" stroke="#c838e0" stroke-width="1.1" stroke-dasharray="6 1.2"/><line x1="531" y1="351" x2="531" y2="398" stroke="#c838e0" stroke-width="1.1" stroke-dasharray="6 1.2"/><line x1="534.5" y1="352" x2="534.5" y2="398" stroke="#c838e0" stroke-width="1.1" stroke-dasharray="6 1.2"/><line x1="538" y1="353" x2="538" y2="393" stroke="#c838e0" stroke-width="1.1" stroke-dasharray="6 1.2"/><line x1="542" y1="354" x2="542" y2="397" stroke="#c838e0" stroke-width="1.1" stroke-dasharray="6 1.2"/><line x1="546" y1="355" x2="546" y2="407" stroke="#c838e0" stroke-width="1.1" stroke-dasharray="6 1.2"/><line x1="549.5" y1="356" x2="549.5" y2="403" stroke="#c838e0" stroke-width="1.1" stroke-dasharray="6 1.2"/><line x1="553.5" y1="357" x2="553.5" y2="402" stroke="#c838e0" stroke-width="1.1" stroke-dasharray="6 1.2"/><line x1="557" y1="355" x2="557" y2="403" stroke="#c838e0" stroke-width="1.1" stroke-dasharray="6 1.2"/><line x1="561" y1="352" x2="561" y2="399" stroke="#c838e0" stroke-width="1.1" stroke-dasharray="6 1.2"/><line x1="564.5" y1="350" x2="564.5" y2="389" stroke="#c838e0" stroke-width="1.1" stroke-dasharray="6 1.2"/><line x1="568.5" y1="348" x2="568.5" y2="395" stroke="#c838e0" stroke-width="1.1" stroke-dasharray="6 1.2"/><rect x="526.6" y="397.7" width="1" height="1" fill="#9a20b0"/><rect x="537.4" y="370.5" width="1" height="1" fill="#9a20b0"/><rect x="569.8" y="381.2" width="1" height="1" fill="#9a20b0"/><rect x="562.8" y="381.4" width="1" height="1" fill="#9a20b0"/><rect x="554.1" y="366.8" width="1" height="1" fill="#9a20b0"/><rect x="553.9" y="399.1" width="1" height="1" fill="#9a20b0"/><rect x="549.0" y="393.4" width="1" height="1" fill="#9a20b0"/><rect x="555.5" y="362.9" width="1" height="1" fill="#9a20b0"/><rect x="559.4" y="386.6" width="1" height="1" fill="#9a20b0"/><rect x="539.3" y="361.4" width="1" height="1" fill="#9a20b0"/><rect x="564.1" y="381.3" width="1" height="1" fill="#9a20b0"/><rect x="557.6" y="399.5" width="1" height="1" fill="#9a20b0"/><rect x="557.4" y="401.4" width="1" height="1" fill="#9a20b0"/><rect x="543.4" y="396.0" width="1" height="1" fill="#9a20b0"/><rect x="545.6" y="402.1" width="1" height="1" fill="#9a20b0"/><rect x="564.7" y="364.4" width="1" height="1" fill="#9a20b0"/><rect x="532.0" y="369.8" width="1" height="1" fill="#9a20b0"/><rect x="568.5" y="379.6" width="1" height="1" fill="#9a20b0"/><rect x="553.6" y="373.5" width="1" height="1" fill="#9a20b0"/><rect x="548.3" y="377.4" width="1" height="1" fill="#9a20b0"/><rect x="541.4" y="386.3" width="1" height="1" fill="#9a20b0"/><rect x="551.7" y="400.7" width="1" height="1" fill="#9a20b0"/><rect x="556.0" y="401.8" width="1" height="1" fill="#9a20b0"/><rect x="563.7" y="404.6" width="1" height="1" fill="#9a20b0"/><rect x="555.5" y="367.3" width="1" height="1" fill="#9a20b0"/><rect x="563.9" y="403.4" width="1" height="1" fill="#9a20b0"/><rect x="565.8" y="385.6" width="1" height="1" fill="#9a20b0"/><rect x="557.4" y="369.5" width="1" height="1" fill="#9a20b0"/><rect x="562.6" y="385.8" width="1" height="1" fill="#9a20b0"/><rect x="538.5" y="362.9" width="1" height="1" fill="#9a20b0"/><rect x="563.6" y="404.5" width="1" height="1" fill="#9a20b0"/><rect x="529.9" y="396.0" width="1" height="1" fill="#9a20b0"/><rect x="544.1" y="366.8" width="1" height="1" fill="#9a20b0"/><rect x="538.9" y="394.6" width="1" height="1" fill="#9a20b0"/><rect x="564.4" y="362.0" width="1" height="1" fill="#9a20b0"/><rect x="553.0" y="362.0" width="1" height="1" fill="#9a20b0"/><rect x="557.6" y="374.9" width="1" height="1" fill="#9a20b0"/><rect x="564.8" y="404.1" width="1" height="1" fill="#9a20b0"/><rect x="548.2" y="404.9" width="1" height="1" fill="#9a20b0"/><rect x="539.6" y="363.5" width="1" height="1" fill="#9a20b0"/></svg>
<svg class="a" style="left:600px;top:440px" width="50" height="42"><defs><radialGradient id="bl"><stop offset="0" stop-color="#1a1ae0"/><stop offset="0.6" stop-color="#1414c8"/><stop offset="1" stop-color="#0a0a60" stop-opacity="0"/></radialGradient></defs><text x="21" y="24.5" font-size="6.5" fill="#fff" font-family="Liberation Sans">X</text><text x="27.5" y="38.5" font-size="6.5" fill="#fff" font-family="Liberation Sans">Y</text><text x="41.5" y="13" font-size="6" fill="#fff" font-family="Liberation Sans">Z</text><ellipse cx="37" cy="25" rx="6" ry="6.5" fill="url(#bl)"/></svg>


<!-- status bar -->
<div class="a" style="left:54px;top:482px;width:597px;height:12px;background:#ece9d8"></div>
<div class="sep" style="left:92px"></div>
<div class="sep" style="left:133px"></div>
<div class="sep" style="left:175px"></div>
<div class="sep" style="left:206px"></div>
<div class="sep" style="left:266px"></div>
<div class="sep" style="left:298px"></div>
<div class="sep" style="left:328px"></div>
<div class="sep" style="left:335px"></div>
<div class="sep" style="left:346px"></div>
<div class="sep" style="left:356px"></div>
<div class="sep" style="left:371px"></div>
<div class="sep" style="left:422px"></div>
<div class="sep" style="left:441px"></div>
<div class="a t" style="left:60px;top:484px;color:#222;font-size:5.3px;line-height:8px;letter-spacing:0.15px">Load Cases</div>
<div class="a t" style="left:105px;top:484px;color:#222;font-size:5.3px;line-height:8px;letter-spacing:0.15px">x[0] Beams</div>
<div class="a t" style="left:138px;top:484px;color:#222;font-size:5.3px;line-height:8px;letter-spacing:0.15px">z(y) [0]Plates</div>
<div class="a t" style="left:181px;top:484px;color:#222;font-size:5.3px;line-height:8px;letter-spacing:0.15px">[0] Links</div>
<div class="a t" style="left:210px;top:484px;color:#222;font-size:5.3px;line-height:8px;letter-spacing:0.15px">[0] Bricks  [0] Nodes</div>
<div class="a t" style="left:270px;top:484px;color:#222;font-size:5.3px;line-height:8px;letter-spacing:0.15px">x[0] Beams</div>
<div class="a t" style="left:301px;top:484px;color:#222;font-size:5.3px;line-height:8px;letter-spacing:0.15px">[0] Plate</div>
<div class="a t" style="left:329px;top:484px;color:#222;font-size:5.3px;line-height:8px;letter-spacing:0.15px">X</div>
<div class="a t" style="left:338px;top:484px;color:#222;font-size:5.3px;line-height:8px;letter-spacing:0.15px">1</div>
<div class="a t" style="left:348px;top:484px;color:#222;font-size:5.3px;line-height:8px;letter-spacing:0.15px">4</div>
<div class="a t" style="left:358px;top:484px;color:#222;font-size:5.3px;line-height:8px;letter-spacing:0.15px">mm</div>
<div class="a t" style="left:375px;top:484px;color:#222;font-size:5.3px;line-height:8px;letter-spacing:0.15px">kN    1.0    m/s</div>
<div class="a t" style="left:425px;top:484px;color:#222;font-size:5.3px;line-height:8px;letter-spacing:0.15px">mm/s</div>
<svg class="a" style="left:643px;top:486px" width="8" height="8"><path d="M7 1L1 7M7 3L3 7M7 5L5 7" stroke="#aca899" stroke-width="1"/></svg>


<!-- ============ nonlinear dialog ============ -->
<div class="a " style="left:81px;top:98px;width:255px;height:235px;background:#ece9d8;border:2px solid #a8b8ec;border-top:none;border-left:1px solid #8898c0;box-shadow:inset 1px 0 0 #f6f8f0"></div>
<div class="a tb" style="left:81px;top:98px;width:255px;height:13px;border-radius:3px 3px 0 0"></div>
<svg class="a" style="left:0;top:0;overflow:visible" width="1" height="1"><text x="84" y="107.5" textLength="198.6" lengthAdjust="spacingAndGlyphs" font-size="7" fill="#f4f6ff" font-family="Liberation Sans" stroke="#fff" stroke-width="0.12">Nonlinear Transient Dynamic Analysis: [CIL06 A pali vincolati base2]</text></svg>
<div class="a wb wbc" style="left:324px;top:100px;width:9px;height:9px;border-color:#c8a8c0;background:linear-gradient(#c07888,#a85868)"><svg width="7" height="7" style="position:absolute;left:0;top:0"><path d="M1.5 1.5l4 4M5.5 1.5l-4 4" stroke="#fff" stroke-width="1.2"/></svg></div>
<div class="a " style="left:83px;top:111px;width:250px;height:10px;background:#ece9d8"></div>
<div class="a " style="left:103px;top:112px;width:2px;height:9px;background:#8d8a7c;border-right:1px solid #fff"></div>
<div class="a " style="left:125px;top:112px;width:2px;height:9px;background:#8d8a7c;border-right:1px solid #fff"></div>
<div class="a " style="left:145px;top:112px;width:2px;height:9px;background:#8d8a7c;border-right:1px solid #fff"></div>
<div class="a " style="left:173px;top:112px;width:2px;height:9px;background:#8d8a7c;border-right:1px solid #fff"></div>
<svg class="a" style="left:0;top:0;overflow:visible" width="1" height="1"><text x="87.7" y="119.3" textLength="11.2" lengthAdjust="spacingAndGlyphs" font-size="6" fill="#111" font-family="Liberation Sans" >Start</text></svg>
<svg class="a" style="left:0;top:0;overflow:visible" width="1" height="1"><text x="105.7" y="119.3" textLength="16.3" lengthAdjust="spacingAndGlyphs" font-size="6" fill="#111" font-family="Liberation Sans" >Results</text></svg>
<svg class="a" style="left:0;top:0;overflow:visible" width="1" height="1"><text x="129.7" y="119.3" textLength="10.3" lengthAdjust="spacingAndGlyphs" font-size="6" fill="#111" font-family="Liberation Sans" >Files</text></svg>
<svg class="a" style="left:0;top:0;overflow:visible" width="1" height="1"><text x="147.7" y="119.3" textLength="23.3" lengthAdjust="spacingAndGlyphs" font-size="6" fill="#111" font-family="Liberation Sans" >Load Steps</text></svg>
<svg class="a" style="left:0;top:0;overflow:visible" width="1" height="1"><text x="177" y="119.3" textLength="15.0" lengthAdjust="spacingAndGlyphs" font-size="6" fill="#111" font-family="Liberation Sans" >Damping</text></svg>
<div class="a " style="left:83px;top:121px;width:251px;height:196px;border-top:1px solid #d2cfc2;border-right:1px solid #a8a596;border-bottom:1px solid #9f9c8e;box-shadow:0 1px 0 #fff;background:#ece9d8"></div>
<div class="a t" style="left:86px;top:125px;font-size:5.5px">Comment</div>
<div class="a " style="left:86px;top:132px;width:244px;height:10px;background:#fff;border:1px solid #8d9ab1"></div>
<div class="a grp" style="left:86px;top:147px;width:57px;height:68px;"></div>
<div class="a t" style="left:88px;top:143.5px;background:#ece9d8;padding:0 1px;font-size:5.5px">Solver</div>
<div class="a rad" style="left:90px;top:159px;width:6px;height:6px;border-color:#4a6a9a"></div>
<div class="a t" style="left:98px;top:159px;font-size:5.5px;line-height:6px;">Skyline</div>
<div class="a rad on" style="left:90px;top:180px;width:6px;height:6px;border-color:#4a6a9a"></div>
<div class="a t" style="left:98px;top:180px;font-size:5.5px;line-height:6px;">Sparse</div>
<div class="a rad" style="left:90px;top:201px;width:6px;height:6px;border-color:#c8c6ba"></div>
<div class="a t" style="left:98px;top:201px;font-size:5.5px;line-height:6px;color:#b2b0a4">Iterative PCG</div>
<div class="a grp" style="left:86px;top:223px;width:57px;height:88px;"></div>
<div class="a t" style="left:88px;top:219.5px;background:#ece9d8;padding:0 1px;font-size:5.5px">Mass matrix</div>
<div class="a rad" style="left:90px;top:234px;width:6px;height:6px;"></div>
<div class="a t" style="left:98px;top:234px;font-size:5.5px;line-height:6px">None</div>
<div class="a rad" style="left:90px;top:251px;width:6px;height:6px;"></div>
<div class="a t" style="left:98px;top:251px;font-size:5.5px;line-height:6px">Consistent</div>
<div class="a rad" style="left:90px;top:267px;width:6px;height:6px;"></div>
<div class="a t" style="left:98px;top:267px;font-size:5.5px;line-height:6px">Row</div>
<div class="a rad on" style="left:90px;top:294px;width:6px;height:6px;"></div>
<div class="a t" style="left:98px;top:294px;font-size:5.5px;line-height:6px">Diag</div>
<div class="a t" style="left:100px;top:279px;font-size:5.5px;line-height:6px;color:#666">1</div>
<div class="a grp" style="left:147px;top:147px;width:182px;height:164px;"></div>
<div class="a t" style="left:150px;top:143.5px;background:#ece9d8;padding:0 1px;font-size:5.5px">Parameters</div>
<div class="a t" style="left:149px;top:154px;font-size:5.5px">Results for transient dependence</div>
<div class="a " style="left:149px;top:160px;width:178px;height:10px;background:#fff"></div>
<div class="a t" style="left:152px;top:162px;font-size:5.5px;line-height:6px">None</div>
<div class="a " style="left:318px;top:160.5px;width:8.5px;height:8px;background:#f2f1ea;border-right:1px solid #c8c6b8;border-bottom:1px solid #c8c6b8"></div>
<div class="a " style="left:320.5px;top:163.5px;width:0px;height:0px;border-left:2px solid transparent;border-right:2px solid transparent;border-top:2px solid #111"></div>
<div class="a chk" style="left:149px;top:173px;width:7px;height:7px;"></div>
<svg class="a" style="left:149px;top:173px" width="7" height="7"><path d="M1.5 3.5l1.5 1.5 2.5-3" fill="none" stroke="#21a121" stroke-width="1.2"/></svg>
<svg class="a" style="left:0;top:0;overflow:visible" width="1" height="1"><text x="157.5" y="178.5" textLength="57.5" lengthAdjust="spacingAndGlyphs" font-size="6" fill="#111" font-family="Liberation Sans" >Save non-linear state (NLS)</text></svg>
<div class="a chk" style="left:149px;top:182px;width:7px;height:7px;"></div>
<svg class="a" style="left:149px;top:182px" width="7" height="7"><path d="M1.5 3.5l1.5 1.5 2.5-3" fill="none" stroke="#21a121" stroke-width="1.2"/></svg>
<svg class="a" style="left:0;top:0;overflow:visible" width="1" height="1"><text x="157.5" y="187.5" textLength="53.5" lengthAdjust="spacingAndGlyphs" font-size="6" fill="#111" font-family="Liberation Sans" >Save initial stress (INS)</text></svg>
<div class="a chk" style="left:149px;top:192px;width:7px;height:7px;"></div>
<svg class="a" style="left:0;top:0;overflow:visible" width="1" height="1"><text x="157.5" y="197.5" textLength="12.5" lengthAdjust="spacingAndGlyphs" font-size="6" fill="#111" font-family="Liberation Sans" >Close</text></svg>
<div class="a btn" style="left:271px;top:174px;width:56px;height:9px;"><div style="font-size:5.5px;line-height:7px;text-align:center;color:#111;white-space:nowrap">Initial Conditions</div></div>
<div class="a btn" style="left:271px;top:185px;width:56px;height:9px;"><div style="font-size:5.5px;line-height:7px;text-align:center;color:#111;white-space:nowrap">Load Tables...</div></div>
<div class="a btn" style="left:271px;top:197px;width:56px;height:9px;"><div style="font-size:5.5px;line-height:7px;text-align:center;color:#111;white-space:nowrap">Time Steps</div></div>
<div class="a btn" style="left:271px;top:208px;width:56px;height:9px;"><div style="font-size:5.5px;line-height:7px;text-align:center;color:#111;white-space:nowrap">Load Tables</div></div>
<div class="a btn" style="left:271px;top:220px;width:56px;height:9px;"><div style="font-size:5.5px;line-height:7px;text-align:center;color:#111;white-space:nowrap">Base Acceleration...</div></div>
<div class="a btn" style="left:271px;top:231px;width:56px;height:9px;border-color:#c9c7bb;background:#f4f3ee"><div style="font-size:5.5px;line-height:7px;text-align:center;color:#b5b3a7;white-space:nowrap">Define Parameters</div></div>
<div class="a grp" style="left:150px;top:204px;width:114px;height:42px;"></div>
<div class="a " style="left:152px;top:203px;width:38px;height:5px;background:#ece9d8"></div>
<svg class="a" style="left:0;top:0;overflow:visible" width="1" height="1"><text x="152.5" y="208" textLength="36.5" lengthAdjust="spacingAndGlyphs" font-size="6" fill="#111" font-family="Liberation Sans" >Damping Model</text></svg>
<div class="a rad" style="left:154px;top:210px;width:6px;height:6px;"></div>
<div class="a t" style="left:162px;top:210px;font-size:5.5px;line-height:6px">None</div>
<div class="a rad on" style="left:154px;top:224px;width:6px;height:6px;"></div>
<div class="a t" style="left:162px;top:224px;font-size:5.5px;line-height:6px">Rayleigh</div>
<div class="a rad" style="left:154px;top:237px;width:6px;height:6px;"></div>
<div class="a t" style="left:162px;top:237px;font-size:5.5px;line-height:6px">Caughey</div>
<div class="a btn" style="left:190px;top:221.5px;width:67px;height:9.5px;border-color:#5b6ea8;border-radius:1px"><div style="font-size:5.5px;line-height:8px;text-align:center;color:#111">Define...</div></div>
<div class="a chk" style="left:85px;top:322px;width:6px;height:6px;"></div>
<svg class="a" style="left:0;top:0;overflow:visible" width="1" height="1"><text x="92.5" y="327.3" textLength="51.2" lengthAdjust="spacingAndGlyphs" font-size="6" fill="#111" font-family="Liberation Sans" >Close dialog when finished</text></svg>
<div class="a btn" style="left:224px;top:319px;width:38px;height:10px;"><div style="font-size:5.5px;line-height:8px;text-align:center;color:#111">Solve</div></div>


<!-- ============ rayleigh dialog ============ -->
<div class="a " style="left:256px;top:242px;width:270px;height:157px;background:#0d50dc"></div>
<div class="a " style="left:256px;top:256px;width:1px;height:141px;background:#2050b8"></div>
<div class="a " style="left:257px;top:256px;width:1px;height:141px;background:#b8d8ff"></div>
<div class="a " style="left:258px;top:256px;width:266px;height:141px;background:#ece9d8"></div>
<div class="a " style="left:256px;top:242px;width:270px;height:14px;background:linear-gradient(to bottom,#0a6cf6,#0658e8 30%,#0050dc 55%,#0a66f6 72%,#0a60f0 86%,#0040c0);border-radius:3px 3px 0 0"></div>
<svg class="a" style="left:0;top:0;overflow:visible" width="1" height="1"><text x="259" y="252.5" textLength="51.0" lengthAdjust="spacingAndGlyphs" font-size="7" fill="#fff" font-family="Liberation Sans" font-weight="bold">Rayleigh Damping</text></svg>
<div class="a wb" style="left:514px;top:244px;width:9px;height:10px;border-color:#f4e0d8;background:linear-gradient(#f0956e,#d85a30)"><svg width="7" height="8" style="position:absolute;left:0;top:0"><path d="M1.5 2l4 4M5.5 2l-4 4" stroke="#fff" stroke-width="1.2"/></svg></div>
<div class="a " style="left:258px;top:256px;width:90px;height:127px;background:#ece9d8"></div>
<div class="a " style="left:258px;top:257px;width:90px;height:27px;border-bottom:1px solid #a8a596;box-shadow:0 1px 0 #fff"></div>
<div class="a t" style="left:261px;top:257px;background:#ece9d8;padding:0 1px;font-size:5.5px">Mode</div>
<div class="a rad on" style="left:263px;top:266px;width:6px;height:6px;"></div>
<div class="a t" style="left:270px;top:266px;font-size:5.5px;line-height:6px">Proportional</div>
<div class="a rad" style="left:263px;top:275px;width:6px;height:6px;"></div>
<div class="a t" style="left:270px;top:275px;font-size:5.5px;line-height:6px">Define Ratio</div>
<div class="a grp" style="left:259px;top:290px;width:87px;height:55px;"></div>
<div class="a t" style="left:261px;top:286px;background:#ece9d8;padding:0 1px;font-size:5.5px">Values</div>
<div class="a t" style="left:260px;top:298px;font-size:5.5px;line-height:7px;width:33px;text-align:right">Freq 1 (Hz)</div>
<div class="a " style="left:297px;top:297px;width:47px;height:9px;background:#fff;border:1px solid #c6c3b6"><div style="font-size:5.3px;line-height:7px;padding-left:2px;color:#111;white-space:nowrap">1.000000 x 10<span style='font-size:4px;position:relative;top:-2px'>0</span></div></div>
<div class="a t" style="left:260px;top:310px;font-size:5.5px;line-height:7px;width:33px;text-align:right">Freq 2 (Hz)</div>
<div class="a " style="left:297px;top:309px;width:47px;height:9px;background:#fff;border:1px solid #c6c3b6"><div style="font-size:5.3px;line-height:7px;padding-left:2px;color:#111;white-space:nowrap">1.000000 x 10<span style='font-size:4px;position:relative;top:-2px'>1</span></div></div>
<div class="a t" style="left:260px;top:321px;font-size:5.5px;line-height:7px;width:33px;text-align:right">Ratio 1</div>
<div class="a " style="left:297px;top:320px;width:47px;height:9px;background:#fff;border:1px solid #c6c3b6"><div style="font-size:5.3px;line-height:7px;padding-left:2px;color:#111;white-space:nowrap">5.000000 x 10<span style='font-size:4px;position:relative;top:-2px'>-2</span></div></div>
<div class="a t" style="left:260px;top:332px;font-size:5.5px;line-height:7px;width:33px;text-align:right">Ratio 2</div>
<div class="a " style="left:297px;top:331px;width:47px;height:9px;background:#fff;border:1px solid #c6c3b6"><div style="font-size:5.3px;line-height:7px;padding-left:2px;color:#111;white-space:nowrap">5.000000 x 10<span style='font-size:4px;position:relative;top:-2px'>-2</span></div></div>
<div class="a grp" style="left:259px;top:349px;width:87px;height:33px;"></div>
<div class="a t" style="left:261px;top:345px;background:#ece9d8;padding:0 1px;font-size:5.5px">Explicit Range</div>
<div class="a t" style="left:260px;top:357px;font-size:5.5px;line-height:7px;width:33px;text-align:right">Freq 1 (Hz)</div>
<div class="a " style="left:297px;top:356px;width:47px;height:9px;background:#fff;border:1px solid #c6c3b6"><div style="font-size:5.3px;line-height:7px;padding-left:2px;color:#111;white-space:nowrap">1.000000 x 10<span style='font-size:4px;position:relative;top:-2px'>0</span></div></div>
<div class="a t" style="left:260px;top:369px;font-size:5.5px;line-height:7px;width:33px;text-align:right">Freq 2 (Hz)</div>
<div class="a " style="left:297px;top:368px;width:47px;height:9px;background:#fff;border:1px solid #c6c3b6"><div style="font-size:5.3px;line-height:7px;padding-left:2px;color:#111;white-space:nowrap">1.000000 x 10<span style='font-size:4px;position:relative;top:-2px'>1</span></div></div>
<div class="a " style="left:349px;top:256px;width:175px;height:127px;background:#fff"></div>
<svg class="a" style="left:0;top:0" width="530" height="400" >
<line x1="405.5" y1="269" x2="405.5" y2="364" stroke="#7a7a7a" stroke-width="1.1"/><line x1="458.5" y1="269" x2="458.5" y2="364" stroke="#7a7a7a" stroke-width="1.1"/><line x1="379.5" y1="288.5" x2="511" y2="288.5" stroke="#7a7a7a" stroke-width="1.1"/><line x1="379.5" y1="326.5" x2="511" y2="326.5" stroke="#7a7a7a" stroke-width="1.1"/><path d="M379.5 364H511V269" fill="none" stroke="#7a7a7a" stroke-width="1.1"/><rect x="379.0" y="269.0" width="1" height="1" fill="#bbb"/><rect x="379.0" y="273.8" width="1" height="1" fill="#bbb"/><rect x="379.0" y="278.5" width="1" height="1" fill="#bbb"/><rect x="379.0" y="283.2" width="1" height="1" fill="#bbb"/><rect x="379.0" y="288.0" width="1" height="1" fill="#bbb"/><rect x="379.0" y="292.8" width="1" height="1" fill="#bbb"/><rect x="379.0" y="297.5" width="1" height="1" fill="#bbb"/><rect x="379.0" y="302.2" width="1" height="1" fill="#bbb"/><rect x="379.0" y="307.0" width="1" height="1" fill="#bbb"/><rect x="379.0" y="311.8" width="1" height="1" fill="#bbb"/><rect x="379.0" y="316.5" width="1" height="1" fill="#bbb"/><rect x="379.0" y="321.2" width="1" height="1" fill="#bbb"/><rect x="379.0" y="326.0" width="1" height="1" fill="#bbb"/><rect x="379.0" y="330.8" width="1" height="1" fill="#bbb"/><rect x="379.0" y="335.5" width="1" height="1" fill="#bbb"/><rect x="379.0" y="340.2" width="1" height="1" fill="#bbb"/><rect x="379.0" y="345.0" width="1" height="1" fill="#bbb"/><rect x="379.0" y="349.8" width="1" height="1" fill="#bbb"/><rect x="379.0" y="354.5" width="1" height="1" fill="#bbb"/><rect x="379.0" y="359.2" width="1" height="1" fill="#bbb"/><rect x="379.0" y="364.0" width="1" height="1" fill="#bbb"/><rect x="379.5" y="363" width="1" height="1" fill="#999"/><rect x="386.1" y="363" width="1" height="1" fill="#999"/><rect x="392.6" y="363" width="1" height="1" fill="#999"/><rect x="399.2" y="363" width="1" height="1" fill="#999"/><rect x="405.8" y="363" width="1" height="1" fill="#999"/><rect x="412.4" y="363" width="1" height="1" fill="#999"/><rect x="418.9" y="363" width="1" height="1" fill="#999"/><rect x="425.5" y="363" width="1" height="1" fill="#999"/><rect x="432.1" y="363" width="1" height="1" fill="#999"/><rect x="438.7" y="363" width="1" height="1" fill="#999"/><rect x="445.2" y="363" width="1" height="1" fill="#999"/><rect x="451.8" y="363" width="1" height="1" fill="#999"/><rect x="458.4" y="363" width="1" height="1" fill="#999"/><rect x="465.0" y="363" width="1" height="1" fill="#999"/><rect x="471.6" y="363" width="1" height="1" fill="#999"/><rect x="478.1" y="363" width="1" height="1" fill="#999"/><rect x="484.7" y="363" width="1" height="1" fill="#999"/><rect x="491.3" y="363" width="1" height="1" fill="#999"/><rect x="497.9" y="363" width="1" height="1" fill="#999"/><rect x="504.4" y="363" width="1" height="1" fill="#999"/><rect x="511.0" y="363" width="1" height="1" fill="#999"/><path d="M391.99 270.23L392.52 273.18L393.04 275.87L393.57 278.34L394.10 280.61L394.62 282.69L395.15 284.62L395.67 286.40L396.20 288.04L396.73 289.57L397.25 290.99L397.78 292.30L398.30 293.53L398.83 294.67L399.36 295.73L399.88 296.72L400.41 297.65L400.93 298.51L401.46 299.32L401.99 300.07L402.51 300.78L403.04 301.44L403.56 302.05L404.09 302.63L404.62 303.17L405.14 303.67L405.67 304.14L406.19 304.58L406.72 304.99L407.25 305.37L407.77 305.73L408.30 306.06L408.82 306.37L409.35 306.65L409.88 306.92L410.40 307.16L410.93 307.38L411.45 307.59L411.98 307.78L412.51 307.95L413.03 308.11L413.56 308.26L414.08 308.38L414.61 308.50L415.14 308.60L415.66 308.69L416.19 308.77L416.71 308.84L417.24 308.89L417.77 308.94L418.29 308.98L418.82 309.00L419.34 309.02L419.87 309.03L420.40 309.03L420.92 309.02L421.45 309.00L421.97 308.98L422.50 308.95L423.03 308.91L423.55 308.86L424.08 308.81L424.60 308.75L425.13 308.69L425.66 308.62L426.18 308.54L426.71 308.46L427.23 308.38L427.76 308.28L428.29 308.19L428.81 308.09L429.34 307.98L429.86 307.87L430.39 307.75L430.92 307.63L431.44 307.51L431.97 307.38L432.49 307.25L433.02 307.12L433.55 306.98L434.07 306.84L434.60 306.69L435.12 306.54L435.65 306.39L436.18 306.23L436.70 306.08L437.23 305.91L437.75 305.75L438.28 305.58L438.81 305.41L439.33 305.24L439.86 305.06L440.38 304.89L440.91 304.71L441.44 304.52L441.96 304.34L442.49 304.15L443.01 303.96L443.54 303.77L444.07 303.58L444.59 303.38L445.12 303.18L445.64 302.98L446.17 302.78L446.70 302.58L447.22 302.37L447.75 302.16L448.27 301.95L448.80 301.74L449.33 301.53L449.85 301.32L450.38 301.10L450.90 300.88L451.43 300.66L451.96 300.44L452.48 300.22L453.01 300.00L453.53 299.77L454.06 299.55L454.59 299.32L455.11 299.09L455.64 298.86L456.16 298.63L456.69 298.40L457.22 298.16L457.74 297.93L458.27 297.69L458.79 297.45L459.32 297.22L459.85 296.98L460.37 296.74L460.90 296.49L461.42 296.25L461.95 296.01L462.48 295.76L463.00 295.52L463.53 295.27L464.05 295.02L464.58 294.77L465.11 294.52L465.63 294.27L466.16 294.02L466.68 293.77L467.21 293.52L467.74 293.26L468.26 293.01L468.79 292.75L469.31 292.50L469.84 292.24L470.37 291.98L470.89 291.72L471.42 291.46L471.94 291.20L472.47 290.94L473.00 290.68L473.52 290.42L474.05 290.16L474.57 289.89L475.10 289.63L475.63 289.37L476.15 289.10L476.68 288.83L477.20 288.57L477.73 288.30L478.26 288.03L478.78 287.76L479.31 287.50L479.83 287.23L480.36 286.96L480.89 286.69L481.41 286.42L481.94 286.14L482.46 285.87L482.99 285.60L483.52 285.33L484.04 285.05L484.57 284.78L485.09 284.50L485.62 284.23L486.15 283.95L486.67 283.68L487.20 283.40L487.72 283.12L488.25 282.85L488.78 282.57L489.30 282.29L489.83 282.01L490.35 281.73L490.88 281.45L491.41 281.17L491.93 280.89L492.46 280.61L492.98 280.33L493.51 280.05L494.04 279.77L494.56 279.49L495.09 279.20L495.61 278.92L496.14 278.64L496.67 278.35L497.19 278.07L497.72 277.79L498.24 277.50L498.77 277.22L499.30 276.93L499.82 276.64L500.35 276.36L500.87 276.07L501.40 275.79L501.93 275.50L502.45 275.21L502.98 274.92L503.50 274.64L504.03 274.35L504.56 274.06L505.08 273.77L505.61 273.48L506.13 273.19L506.66 272.90L507.19 272.61L507.71 272.32L508.24 272.03L508.76 271.74L509.29 271.45L509.82 271.16L510.34 270.87L510.87 270.58" fill="none" stroke="#b02a2a" stroke-width="1.1" stroke-dasharray="1.3 1.2"/><text x="376" y="271.2" font-size="6" text-anchor="end" fill="#000" stroke="#000" stroke-width="0.25" font-family="Liberation Sans">0.067</text><text x="376" y="290.2" font-size="6" text-anchor="end" fill="#000" stroke="#000" stroke-width="0.25" font-family="Liberation Sans">0.060</text><text x="376" y="309.2" font-size="6" text-anchor="end" fill="#000" stroke="#000" stroke-width="0.25" font-family="Liberation Sans">0.053</text><text x="376" y="328.2" font-size="6" text-anchor="end" fill="#000" stroke="#000" stroke-width="0.25" font-family="Liberation Sans">0.047</text><text x="376" y="347.2" font-size="6" text-anchor="end" fill="#000" stroke="#000" stroke-width="0.25" font-family="Liberation Sans">0.040</text><text x="376" y="366.2" font-size="6" text-anchor="end" fill="#000" stroke="#000" stroke-width="0.25" font-family="Liberation Sans">0.033</text><text x="379.5" y="371.5" font-size="6" text-anchor="middle" fill="#000" stroke="#000" stroke-width="0.25" font-family="Liberation Sans">0.0</text><text x="405.8" y="371.5" font-size="6" text-anchor="middle" fill="#000" stroke="#000" stroke-width="0.25" font-family="Liberation Sans">2.0</text><text x="432.1" y="371.5" font-size="6" text-anchor="middle" fill="#000" stroke="#000" stroke-width="0.25" font-family="Liberation Sans">4.0</text><text x="458.4" y="371.5" font-size="6" text-anchor="middle" fill="#000" stroke="#000" stroke-width="0.25" font-family="Liberation Sans">6.0</text><text x="484.7" y="371.5" font-size="6" text-anchor="middle" fill="#000" stroke="#000" stroke-width="0.25" font-family="Liberation Sans">8.0</text><text x="511.0" y="371.5" font-size="6" text-anchor="middle" fill="#000" stroke="#000" stroke-width="0.25" font-family="Liberation Sans">10.0</text><text x="445" y="378.5" font-size="5.4" text-anchor="middle" fill="#000" stroke="#000" stroke-width="0.25" font-family="Liberation Sans">Frequency (Hz)</text><text x="445" y="265.5" font-size="5.6" text-anchor="middle" fill="#000" stroke="#000" stroke-width="0.25" font-family="Liberation Sans">Rayleigh Damping</text><text transform="translate(358.5,318.5) rotate(-90)" font-size="6" text-anchor="middle" textLength="51" lengthAdjust="spacingAndGlyphs" fill="#000" stroke="#000" stroke-width="0.25" font-family="Liberation Sans">Proportional Damping Ratio</text></svg>
<div class="a btn" style="left:455px;top:386px;width:32px;height:9px;"><div style="font-size:5.5px;line-height:7px;text-align:center;color:#111">OK</div></div>
<div class="a btn" style="left:490px;top:386px;width:32px;height:9px;"><div style="font-size:5.5px;line-height:7px;text-align:center;color:#111">Cancel</div></div>


<div class="a line" style="top:499px"></div>
<div class="a ftr" style="left:6px;letter-spacing:-0.1px">Luca Sgambi – SAIE 09</div>
<div class="a ftr" style="left:586px;letter-spacing:-0.12px">28 – Ottobre - 2009</div>
</body></html>
